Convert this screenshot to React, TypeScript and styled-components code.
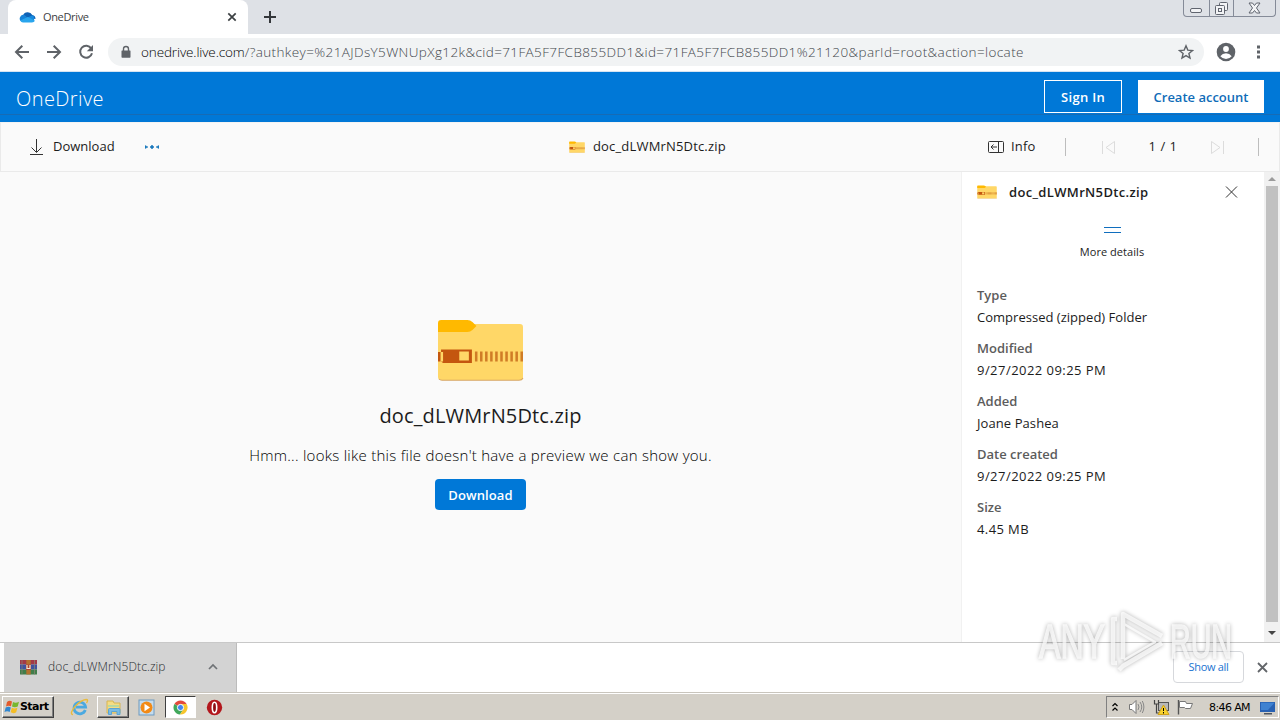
import React, { ReactNode } from 'react';
import styled, { createGlobalStyle } from 'styled-components';

const GlobalStyle = createGlobalStyle`
  * {
    box-sizing: border-box;
  }

  body {
    margin: 0;
    overflow: hidden;
    font-family: 'Open Sans', 'Noto Sans', sans-serif;
    font-size: 13px;
    color: #1c1c1c;
  }

  button {
    padding: 0;
    border: 0;
    background: none;
    font: inherit;
    color: inherit;
  }

  svg {
    display: block;
    flex: none;
  }
`;

const Screen = styled.div`
  position: relative;
  display: flex;
  flex-direction: column;
  width: 1280px;
  height: 720px;
  overflow: hidden;
  background-color: white;
`;

const Text = styled.span<{ $size?: number; $spacing?: number; $weight?: number; $color?: string }>`
  font-size: ${(props) => props.$size ?? 13}px;
  font-weight: ${(props) => props.$weight ?? 400};
  letter-spacing: ${(props) => props.$spacing ?? 0}px;
  color: ${(props) => props.$color ?? 'inherit'};
  line-height: 20px;
  white-space: pre;
`;

const TabStrip = styled.div`
  display: flex;
  height: 34px;
  padding-left: 8px;
  background-color: #dee1e6;
`;

const Tab = styled.div`
  display: flex;
  align-items: center;
  width: 240px;
  padding: 0 11px 0 11px;
  border-radius: 8px 8px 0 0;
  background-color: white;
`;

const TabTitle = styled.div`
  flex: 1;
  padding-left: 7px;
`;

const NewTab = styled.button`
  display: flex;
  align-items: center;
  padding-left: 16px;
`;

const WindowControls = styled.div`
  display: flex;
  width: 93px;
  height: 17px;
  margin: 0 4px 0 auto;
  border: 1px solid #858b98;
  border-top: 0;
  border-radius: 0 0 4px 4px;
`;

const WindowButton = styled.button<{ $width: number }>`
  display: flex;
  align-items: center;
  justify-content: center;
  width: ${(props) => props.$width}px;

  & + & {
    border-left: 1px solid #858b98;
  }
`;

const AddressRow = styled.div`
  display: flex;
  align-items: center;
  height: 38px;
  padding: 0 12px 1px 14px;
  border-bottom: 1px solid #d5e4f2;
`;

const Nav = styled.div`
  display: flex;
  gap: 16px;
  width: 94px;
`;

const AddressBar = styled.div`
  display: flex;
  align-items: center;
  width: 1096px;
  height: 28px;
  padding: 0 10px 0 12px;
  border-radius: 14px;
  background-color: #f1f3f4;
`;

const Url = styled.div`
  flex: 1;
  padding: 0 0 1px 9px;
`;

const ProfileArea = styled.div`
  display: flex;
  align-items: center;
  gap: 13px;
  margin-left: 11px;
`;

const Header = styled.header`
  display: flex;
  align-items: center;
  height: 50px;
  padding: 0 16px 1px;
  background: linear-gradient(#0078d7 42px, #176bb4 42px, #176bb4 43px, #0078d7 43px);
  color: white;
`;

const Brand = styled.div`
  flex: 1;
  padding-top: 6px;
`;

const HeaderButton = styled.button<{ $width: number; $filled?: boolean }>`
  width: ${(props) => props.$width}px;
  height: 33px;
  margin-left: 16px;
  border: 1px solid white;
  background-color: ${(props) => (props.$filled ? 'white' : 'transparent')};
  color: ${(props) => (props.$filled ? '#0f6cb8' : 'white')};
`;

const CommandBar = styled.div`
  display: grid;
  grid-template-columns: 568px 1fr 292px;
  align-items: center;
  height: 50px;
  border: 1px solid #eaeaea;
  border-top-color: #f3f3f3;
  background-color: #fafafa;
`;

const CommandGroup = styled.div`
  display: flex;
  align-items: center;

  ${Text} {
    padding-bottom: 2px;
  }
`;

const Space = styled.div<{ $width: number }>`
  flex: none;
  width: ${(props) => props.$width}px;
`;

const Divider = styled.div`
  width: 1px;
  height: 18px;
  background-color: #bdbdbd;
`;

const Main = styled.main`
  display: flex;
  height: 470px;
`;

const Preview = styled.section`
  display: flex;
  flex-direction: column;
  align-items: center;
  width: 961px;
  padding-top: 146px;
  background-color: #fafafa;
`;

const PreviewTitle = styled.h1`
  margin: 19px 0 0;
  font-size: 20px;
  font-weight: 400;
  line-height: 30px;
`;

const PreviewMessage = styled.p`
  margin: 14px 0 0;
  line-height: 20px;
`;

const DownloadButton = styled.button`
  width: 91px;
  height: 31px;
  margin-top: 13px;
  border-radius: 4px;
  background-color: #0078d7;
  color: white;
`;

const Details = styled.aside`
  display: flex;
  flex-direction: column;
  width: 303px;
  padding-left: 15px;
  border-left: 1px solid #f1f1f1;
`;

const DetailsHeader = styled.div`
  display: flex;
  align-items: center;
  height: 40px;
  padding-right: 26px;
`;

const DetailsName = styled.div`
  flex: 1;
  padding-left: 12px;
`;

const MoreDetails = styled.button`
  display: flex;
  flex-direction: column;
  align-items: center;
  justify-content: flex-start;
  gap: 9px;
  width: 270px;
  height: 73px;
  padding-top: 15px;
`;

const Handle = styled.div`
  width: 17px;
  height: 6px;
  border: 1px solid #106ebe;
  border-width: 1px 0;
`;

const Fields = styled.dl`
  margin: 0;
`;

const Field = styled.div`
  height: 53px;
`;

const Term = styled.dt`
  height: 22px;
  color: #5c5c5c;
  line-height: 20px;
`;

const Description = styled.dd`
  margin: 0;
  line-height: 20px;
`;

const ScrollBar = styled.div`
  display: flex;
  flex-direction: column;
  align-items: center;
  width: 16px;
  padding: 5px 0 7px;
  background-color: #f1f1f1;
`;

const Thumb = styled.div`
  flex: 1;
  width: 12px;
  margin: 5px 0 9px;
  background-color: #c1c1c1;
`;

const Shelf = styled.div`
  display: flex;
  align-items: center;
  height: 50px;
  padding: 0 12px 0 4px;
  border-top: 1px solid #c8c8c8;
`;

const ShelfItem = styled.div`
  display: flex;
  align-items: center;
  width: 233px;
  height: 49px;
  padding: 0 18px 2px 16px;
  border-right: 1px solid #bcbcbc;
  background-color: #d3d3d3;
  color: #505357;
`;

const ShelfName = styled.div`
  flex: 1;
  padding-left: 11px;
`;

const ShowAll = styled.button`
  width: 71px;
  height: 32px;
  margin: 0 13px 1px auto;
  padding-bottom: 1px;
  border: 1px solid #d6d8dc;
  border-radius: 4px;
  color: #1a73d0;
`;

const TaskBar = styled.footer`
  display: flex;
  align-items: center;
  height: 28px;
  padding: 1px 0 0 2px;
  border-top: 1px solid #c9c5bd;
  box-shadow: inset 0 1px white;
  background-color: #d4d0c8;
`;

const StartButton = styled.button`
  display: flex;
  align-items: center;
  gap: 1px;
  width: 52px;
  height: 22px;
  padding-left: 1px;
  border: 1px solid #404040;
  border-color: white #404040 #404040 white;
  box-shadow: inset -1px -1px #808080;
  color: black;
  font-family: 'DejaVu Sans', sans-serif;
`;

const TaskButton = styled.button<{ $state?: 'raised' | 'pressed'; $width: number }>`
  display: flex;
  align-items: center;
  justify-content: center;
  width: ${(props) => props.$width}px;
  height: 22px;
  border: 1px solid transparent;
  ${(props) => props.$state === 'raised' && 'border-color: white #404040 #404040 white; box-shadow: inset -1px -1px #808080;'}
  ${(props) => props.$state === 'pressed' && 'border-color: #404040 white white #404040; background-color: white;'}
`;

const Tray = styled.div`
  display: flex;
  align-items: center;
  width: 173px;
  height: 22px;
  margin: 0 1px 0 auto;
  padding-left: 5px;
  border: 1px solid #808080;
  border-color: #808080 white white #808080;
  color: black;
`;

const Clock = styled.div`
  margin: 0 10px 0 15px;
  padding-top: 1px;
  font-family: 'DejaVu Sans', sans-serif;
`;

const Watermark = styled.svg`
  position: absolute;
  left: 1031px;
  top: 601px;
  filter: drop-shadow(0 0 2px rgba(0, 0, 0, 0.4));
`;

function Glyph({ width, height, children }: { width: number; height: number; children: ReactNode }) {
  return (
    <svg width={width} height={height} viewBox={`0 0 ${width} ${height}`} fill="none">
      {children}
    </svg>
  );
}

function CloudLogo() {
  return (
    <Glyph width={17} height={12}>
      <path d="M4 4.5A5.2 5.2 0 0 1 13.3 4A4 4 0 0 1 16.5 8L9 7Z" fill="#0f62b5" />
      <path d="M4 3.7A4 4 0 0 0 1.5 10L9 7L5.5 4Z" fill="#1683d8" />
      <path d="M9 6.3L13.5 4.2A3.8 3.8 0 0 1 13 11Z" fill="#1789de" />
      <path d="M1.2 9.5L9 6L16 9.8Q15 11.4 13 11.5H4Q2 11.4 1.2 9.5Z" fill="#29a5ed" />
    </Glyph>
  );
}

function ZipFolder({ width, height }: { width: number; height: number }) {
  return (
    <svg width={width} height={height} viewBox="0 0 86 64" preserveAspectRatio="none">
      <path d="M1 6H82Q85 6 85 9V60Q85 62 82 62H4Q1 62 1 59Z" fill="#ffd767" />
      <path d="M1 5Q1 2 4 2H30Q33 2 35 4L39 8L35 12Q33 14 30 14H1Z" fill="#ffb900" />
      <path d="M2 61Q3 62.3 5 62.3H81Q84 62.3 85 60" fill="none" stroke="#d8a560" />
      <path d="M1 34H3.5V43.5H1ZM4 31.5H34.5V45H6L4 43.5H6V34H4Z" fill="#c4560f" />
      <path d="M22 33.5H31.5V42.5H22Z" fill="#ffd767" />
      {Array.from({ length: 10 }, (_, i) => (
        <path key={i} d={`M${37.5 + i * 5} 33.5h2.5v10h-2.5z`} fill="#d07c26" />
      ))}
    </svg>
  );
}

function BrowserTop() {
  return (
    <>
      <TabStrip>
        <Tab>
          <CloudLogo />
          <TabTitle>
            <Text $size={11} $spacing={-0.35} $color="#3c4043">OneDrive</Text>
          </TabTitle>
          <Glyph width={10} height={10}>
            <path d="M1.3 1.3L8.7 8.7M8.7 1.3L1.3 8.7" stroke="#3c4043" strokeWidth="1.7" />
          </Glyph>
        </Tab>
        <NewTab>
          <Glyph width={12} height={12}>
            <path d="M6 0V12M0 6H12" stroke="#34373b" strokeWidth="2" />
          </Glyph>
        </NewTab>
        <WindowControls>
          <WindowButton $width={25}>
            <Glyph width={13} height={13}>
              <rect x=".5" y="6.5" width="11" height="4" rx="1.5" fill="#f2f3f5" stroke="#60656f" />
            </Glyph>
          </WindowButton>
          <WindowButton $width={25}>
            <Glyph width={15} height={15}>
              <rect x="5.5" y="1.5" width="8" height="8" rx="1" fill="#f2f3f5" stroke="#60656f" />
              <rect x="1.5" y="4.5" width="9" height="9" rx="1" fill="#f2f3f5" stroke="#60656f" />
              <rect x="4.5" y="7.5" width="3" height="3" stroke="#60656f" />
            </Glyph>
          </WindowButton>
          <WindowButton $width={42}>
            <Glyph width={13} height={12}>
              <path d="M1 1H4.5L6.5 3.5L8.5 1H12L8.5 6L12 11H8.5L6.5 8.5L4.5 11H1L4.5 6Z" fill="#f2f3f5" stroke="#60656f" />
            </Glyph>
          </WindowButton>
        </WindowControls>
      </TabStrip>
      <AddressRow>
        <Nav>
          <Glyph width={16} height={16}>
            <path d="M15 8H2.5M8.3 1.7L2 8L8.3 14.3" stroke="#5f6368" strokeWidth="2" />
          </Glyph>
          <Glyph width={16} height={16}>
            <path d="M1 8H13.5M7.7 1.7L14 8L7.7 14.3" stroke="#5f6368" strokeWidth="2" />
          </Glyph>
          <Glyph width={16} height={16}>
            <path d="M13.2 4.4A6 6 0 1 0 14 9.3" stroke="#5f6368" strokeWidth="2" />
            <path d="M15 1V7.2H8.8Z" fill="#5f6368" />
          </Glyph>
        </Nav>
        <AddressBar>
          <Glyph width={12} height={14}>
            <path d="M2 5.5H10Q10.5 5.5 10.5 6V12Q10.5 12.7 9.8 12.7H2.2Q1.5 12.7 1.5 12V6Q1.5 5.5 2 5.5Z" fill="#5f6368" />
            <path d="M3.5 6V4A2.5 2.5 0 0 1 8.5 4V6" stroke="#5f6368" strokeWidth="1.4" />
          </Glyph>
          <Url>
            <Text $size={13.5} $spacing={-0.12} $weight={300} $color="#000">onedrive.live.com</Text>
            <Text $size={13.5} $spacing={0.39} $weight={300} $color="#43474c">
              /?authkey=%21AJDsY5WNUpXg12k&amp;cid=71FA5F7FCB855DD1&amp;id=71FA5F7FCB855DD1%21120&amp;parId=root&amp;action=locate
            </Text>
          </Url>
          <Glyph width={16} height={16}>
            <path d="M8 1.8L9.8 6.1L14.5 6.5L10.9 9.5L12 14L8 11.6L4 14L5.1 9.5L1.5 6.5L6.2 6.1Z" stroke="#5f6368" strokeWidth="1.4" />
          </Glyph>
        </AddressBar>
        <ProfileArea>
          <Glyph width={22} height={20}>
            <circle cx="11" cy="10" r="9.3" fill="#5f6368" />
            <circle cx="11" cy="7" r="2.9" fill="white" />
            <path d="M5.3 14.2Q7.5 11.3 11 11.3T16.7 14.2Q14.3 17 11 17T5.3 14.2Z" fill="white" />
          </Glyph>
          <Glyph width={16} height={16}>
            <path d="M7 1.5h3v3h-3zM7 6.5h3v3h-3zM7 11.5h3v3h-3z" fill="#5f6368" />
          </Glyph>
        </ProfileArea>
      </AddressRow>
    </>
  );
}

const fields = [
  { label: 'Type', value: 'Compressed (zipped) Folder', spacing: 0.02 },
  { label: 'Modified', value: '9/27/2022 09:25 PM', spacing: 0.46 },
  { label: 'Added', value: 'Joane Pashea', spacing: 0.08 },
  { label: 'Date created', value: '9/27/2022 09:25 PM', spacing: 0.46 },
  { label: 'Size', value: '4.45 MB', spacing: 0.4 },
];

function OneDrive() {
  return (
    <>
      <Header>
        <Brand>
          <Text $size={20} $weight={300} $spacing={0.4}>OneDrive</Text>
        </Brand>
        <HeaderButton $width={78}>
          <Text $weight={600} $spacing={0.3}>Sign In</Text>
        </HeaderButton>
        <HeaderButton $width={126} $filled>
          <Text $weight={600}>Create account</Text>
        </HeaderButton>
      </Header>
      <CommandBar>
        <CommandGroup>
          <Space $width={28} />
          <Glyph width={14} height={18}>
            <path d="M7.5 1V14M2.5 9.5L7.5 14.5L12.5 9.5M1 16.5H14" stroke="#333" />
          </Glyph>
          <Space $width={10} />
          <Text>Download</Text>
          <Space $width={30} />
          <Glyph width={14} height={4}>
            <path d="M0 .5L3 2L0 3.5ZM7 0L9 2L7 4L5 2ZM14 .5L11 2L14 3.5Z" fill="#1b78bd" stroke="#1b78bd" strokeWidth=".5" />
          </Glyph>
        </CommandGroup>
        <CommandGroup>
          <ZipFolder width={16} height={12} />
          <Space $width={8} />
          <Text $spacing={0.17}>doc_dLWMrN5Dtc.zip</Text>
        </CommandGroup>
        <CommandGroup>
          <Space $width={1} />
          <Glyph width={16} height={14}>
            <rect x=".5" y="1.5" width="15" height="11" rx="1" stroke="#333" />
            <path d="M10.5 1.5V12.5M9 7H3M5.5 4.5L3 7L5.5 9.5" stroke="#333" />
          </Glyph>
          <Space $width={7} />
          <Text $spacing={0.2}>Info</Text>
          <Space $width={29} />
          <Divider />
          <Space $width={35} />
          <Glyph width={15} height={15}>
            <path d="M1.5 1V14M13.5 1.5V13.5L5 7.5Z" stroke="#dcdcdc" />
          </Glyph>
          <Space $width={33} />
          <Text $spacing={0.5}>1 / 1</Text>
          <Space $width={32} />
          <Glyph width={15} height={15}>
            <path d="M13.5 1V14M1.5 1.5V13.5L10 7.5Z" stroke="#dcdcdc" />
          </Glyph>
          <Space $width={33} />
          <Divider />
        </CommandGroup>
      </CommandBar>
      <Main>
        <Preview>
          <ZipFolder width={87} height={64} />
          <PreviewTitle>
            <Text $size={20} $spacing={0.15}>doc_dLWMrN5Dtc.zip</Text>
          </PreviewTitle>
          <PreviewMessage>
            <Text $size={15} $weight={300} $spacing={0.27} $color="#000">
              Hmm... looks like this file doesn't have a preview we can show you.
            </Text>
          </PreviewMessage>
          <DownloadButton>
            <Text $weight={600} $spacing={0.1}>Download</Text>
          </DownloadButton>
        </Preview>
        <Details>
          <DetailsHeader>
            <ZipFolder width={20} height={14} />
            <DetailsName>
              <Text $weight={600} $spacing={0.34}>doc_dLWMrN5Dtc.zip</Text>
            </DetailsName>
            <Glyph width={13} height={13}>
              <path d="M1 .5L12 11.5M12 .5L1 11.5" stroke="#333" />
            </Glyph>
          </DetailsHeader>
          <MoreDetails>
            <Handle />
            <Text $size={11} $spacing={0.05}>More details</Text>
          </MoreDetails>
          <Fields>
            {fields.map((field) => (
              <Field key={field.label}>
                <Term>
                  <Text $weight={600}>{field.label}</Text>
                </Term>
                <Description>
                  <Text $spacing={field.spacing}>{field.value}</Text>
                </Description>
              </Field>
            ))}
          </Fields>
        </Details>
        <ScrollBar>
          <Glyph width={8} height={4}>
            <path d="M0 4L4 0L8 4Z" fill="#9b9b9b" />
          </Glyph>
          <Thumb />
          <Glyph width={8} height={4}>
            <path d="M0 0H8L4 4Z" fill="#454545" />
          </Glyph>
        </ScrollBar>
      </Main>
    </>
  );
}

function DownloadShelf() {
  return (
    <Shelf>
      <ShelfItem>
        <Glyph width={17} height={16}>
          <path d="M0 1H17V5.5H0Z" fill="#a33a48" />
          <path d="M0 5.5H17V10.5H0Z" fill="#40539f" />
          <path d="M0 10.5H17V15.5H0Z" fill="#417e4b" />
          <path d="M2 1V15.5M14.5 1V15.5" stroke="#8d8474" strokeWidth=".7" />
          <path d="M6.3 1H10.7V15.5H6.3Z" fill="#b5722f" />
          <path d="M6 5.5H11V11H6Z" fill="#b04431" />
          <path d="M7 6V9.5H10V6" stroke="#f3ead6" strokeWidth="1.2" />
        </Glyph>
        <ShelfName>
          <Text $size={12} $weight={300} $spacing={0.1} $color="#2b2d30">doc_dLWMrN5Dtc.zip</Text>
        </ShelfName>
        <Glyph width={10} height={7}>
          <path d="M1 6L5 2L9 6" stroke="#6f7276" strokeWidth="1.7" />
        </Glyph>
      </ShelfItem>
      <ShowAll>
        <Text $size={11} $spacing={-0.3}>Show all</Text>
      </ShowAll>
      <Glyph width={11} height={11}>
        <path d="M1 1L10 10M10 1L1 10" stroke="#63666a" strokeWidth="1.8" />
      </Glyph>
    </Shelf>
  );
}

function WindowsBar() {
  return (
    <TaskBar>
      <StartButton>
        <Glyph width={15} height={16}>
          <path d="M3 3Q5.5 1 8 2.5L7 7.3Q4.5 6 2 7.5Z" fill="#e35b2c" />
          <path d="M9 3Q11.5 4.5 15 2.8L13.7 7.5Q11 9 8 7.6Z" fill="#77b72f" />
          <path d="M1.7 8.5Q4.5 7 6.8 8.4L5.7 13Q3.2 11.5.5 13Z" fill="#3187d0" />
          <path d="M7.8 8.8Q10.5 10.2 13.4 8.7L12.2 13.2Q9.5 15 6.7 13.3Z" fill="#f4bd25" />
        </Glyph>
        <Text $size={11} $weight={700} $spacing={-0.55}>Start</Text>
      </StartButton>
      <Space $width={16} />
      <Glyph width={20} height={18}>
        <path d="M15.3 12A5.8 5.8 0 1 1 15.6 9.2H6" stroke="#4ba9e0" strokeWidth="2.8" />
        <path d="M3 16.5Q-1 16 5 8.5Q11 2 16 1.5Q19 1.5 16.5 5" stroke="#e9bb3c" strokeWidth="1.3" />
      </Glyph>
      <Space $width={7} />
      <TaskButton $width={32} $state="raised">
        <Glyph width={17} height={17}>
          <path d="M2 2H8L9 4H15V14H2Z" fill="#f5dc83" stroke="#d6b452" />
          <path d="M3 6H14V8H3Z" fill="#b9d8a0" />
          <path d="M3.5 15.5V10.5Q3.5 9.5 4.5 9.5H14Q15 9.5 15 10.5V15.5H12V12.5H6.5V15.5Z" fill="#78bce5" stroke="#5ba3d2" />
        </Glyph>
      </TaskButton>
      <Space $width={9} />
      <Glyph width={17} height={17}>
        <rect x="1" y="1" width="15" height="15" fill="#c5dced" stroke="#6d9ac0" />
        <circle cx="8.5" cy="8.5" r="6" fill="#f28a16" />
        <path d="M6.5 4.8L12 8.5L6.5 12.2Z" fill="white" />
      </Glyph>
      <Space $width={10} />
      <TaskButton $width={31} $state="pressed">
        <Glyph width={15} height={15}>
          <path d="M7.5 7.5L1.4 4A7 7 0 0 1 13.6 4H7.5Z" fill="#e34a3c" />
          <path d="M7.5 7.5L1.4 4A7 7 0 0 0 7 14.5L10.5 9.2Z" fill="#41a85b" />
          <path d="M7.5 4H13.6A7 7 0 0 1 7 14.5L10.5 9Z" fill="#f7c52c" />
          <circle cx="7.5" cy="7.5" r="3.1" fill="#4286ef" stroke="white" />
        </Glyph>
      </TaskButton>
      <Space $width={10} />
      <Glyph width={17} height={17}>
        <circle cx="8.5" cy="8.5" r="7.7" fill="#b3171c" />
        <ellipse cx="8.5" cy="8.5" rx="2.2" ry="5.2" fill="#8e0d12" stroke="white" strokeWidth="1.6" />
      </Glyph>
      <Tray>
        <Glyph width={6} height={10}>
          <path d="M.5 4L3 1.5L5.5 4M.5 8.5L3 6L5.5 8.5" stroke="black" strokeWidth="1.2" />
        </Glyph>
        <Space $width={10} />
        <Glyph width={17} height={16}>
          <path d="M1.5 5.5H4L8 1.5V14.5L4 10.5H1.5Z" fill="white" stroke="#777" />
          <path d="M10 5Q12 8 10 11M12 3Q15.5 8 12 13M14.3 2Q17.5 8 14.3 14" stroke="#888" />
        </Glyph>
        <Space $width={8} />
        <Glyph width={17} height={17}>
          <rect x="5.5" y="3.5" width="10" height="8" fill="#b8b8b8" stroke="#555" />
          <path d="M1.5 1V5H5.5V1M3.5 5V14H7" stroke="#444" strokeWidth="1.2" />
          <path d="M10.5 6L16 15.5H5Z" fill="#f8d22d" stroke="#d0a11a" />
          <path d="M10.5 9V12M10.5 13V14.5" stroke="black" />
        </Glyph>
        <Space $width={7} />
        <Glyph width={17} height={16}>
          <path d="M1.5 1V15.5" stroke="#555" strokeWidth="1.4" />
          <path d="M2.5 2.5H8.5L9.5 4.5H15.5L13.5 9.5H8.5L7.5 8.5H2.5Z" fill="white" stroke="#777" />
        </Glyph>
        <Clock>
          <Text $size={11} $spacing={-0.6}>8:46 AM</Text>
        </Clock>
        <Glyph width={16} height={15}>
          <path d="M0 2H15V12H0Z" fill="#2861b2" />
          <path d="M1 2.7H14.5L8 10H1Z" fill="#3f82d1" />
          <path d="M4 13H12V14.5H4Z" fill="#4d5560" />
        </Glyph>
      </Tray>
    </TaskBar>
  );
}

function AnyRunMark() {
  return (
    <Watermark width={220} height={80} viewBox="0 0 220 80" fill="none">
      <g
        fill="white"
        stroke="white"
        strokeWidth="1.4"
        opacity=".75"
        fontFamily="Liberation Sans, sans-serif"
        fontSize="49"
      >
        <text x="8" y="57" textLength="66" lengthAdjust="spacingAndGlyphs">ANY</text>
        <text x="139" y="57" textLength="62" lengthAdjust="spacingAndGlyphs">RUN</text>
      </g>
      <g stroke="white" strokeWidth="4.5" strokeLinejoin="round" opacity=".75">
        <path d="M86 18H82V62H86" />
        <path d="M92 58V13L131 35" />
        <path d="M93 23L124 41L93 59" strokeWidth="2.5" />
        <path d="M131 42L92 65L88 69" />
      </g>
    </Watermark>
  );
}

function App() {
  return (
    <Screen>
      <GlobalStyle />
      <BrowserTop />
      <OneDrive />
      <DownloadShelf />
      <WindowsBar />
      <AnyRunMark />
    </Screen>
  );
}

export default App;
